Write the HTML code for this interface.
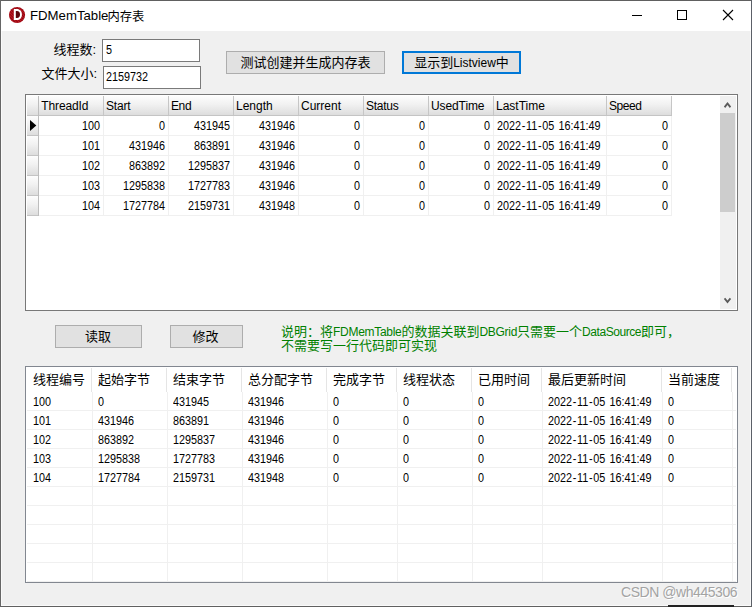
<!DOCTYPE html><html><head><meta charset="utf-8"><title>FDMemTable内存表</title><style>
html,body{margin:0;padding:0;}
body{width:752px;height:607px;overflow:hidden;position:relative;background:#f0f0f0;
 font-family:"Liberation Sans","Noto Sans CJK SC",sans-serif;font-size:12px;color:#000;}
.a{position:absolute;white-space:nowrap;}
.c{font-family:"Liberation Sans","Noto Sans CJK SC",sans-serif;font-size:13px;}
.n{font-size:12px;transform:scaleX(.9);transform-origin:0 0;}
.nr{transform-origin:100% 0;}
.h{margin:0 .75px;}
.ts{word-spacing:1.4px;}
.t{position:absolute;white-space:nowrap;line-height:16px;height:16px;}
.btn{position:absolute;box-sizing:border-box;background:#e1e1e1;border:1px solid #adadad;}
.edit{position:absolute;box-sizing:border-box;background:#fff;border:1px solid #7a7a7a;}
.box{position:absolute;box-sizing:border-box;background:#fff;border:1px solid #828790;}
.vl{position:absolute;width:1px;}
.hl{position:absolute;height:1px;}
.g{color:#008000;}
</style></head><body>
<div class="a" style="left:0;top:0;width:752px;height:31px;background:#fff"></div>
<div class="a" style="left:1px;top:31px;width:1px;height:575px;background:#fafafa"></div>
<div class="a" style="left:1px;top:605px;width:750px;height:1px;background:#fafafa"></div>
<div class="a" style="left:750px;top:31px;width:1px;height:575px;background:#f8f8f8"></div>
<div class="a" style="left:0;top:0;width:752px;height:1px;background:#606060"></div>
<div class="a" style="left:0;top:0;width:1px;height:607px;background:#666"></div>
<div class="a" style="left:751px;top:0;width:1px;height:607px;background:#5c6068"></div>
<div class="a" style="left:0;top:606px;width:752px;height:1px;background:#606060"></div>
<svg class="a" style="left:8px;top:6px" width="18" height="18" viewBox="0 0 18 18"><defs><pattern id="hp" width="2" height="2" patternUnits="userSpaceOnUse" patternTransform="rotate(45)"><rect width="2" height="2" fill="#c8141f"/><rect width="2" height="0.9" fill="#7c0811"/></pattern></defs><circle cx="9.05" cy="9" r="8.1" fill="url(#hp)"/><path d="M5.8 2.9h3c3.2 0 5.1 2.3 5.1 5.55s-1.9 5.55-5.1 5.55H5.8z" fill="#fff"/><path d="M7.8 4.9h1.2c2 0 3 1.5 3 3.5s-1 3.5-3 3.5H7.8z" fill="#5e060c"/></svg>
<div class="t" style="left:30px;top:8px;font-size:13.2px">FDMemTable</div><div class="t" style="left:107.5px;top:8.6px;font-size:12.3px">内存表</div>
<div class="a" style="left:632px;top:15px;width:10px;height:1px;background:#000"></div>
<div class="a" style="left:677px;top:10px;width:10px;height:10px;box-sizing:border-box;border:1px solid #000"></div>
<svg class="a" style="left:722px;top:9px" width="12" height="12" viewBox="0 0 12 12"><path d="M1 1 L11 11 M11 1 L1 11" stroke="#000" stroke-width="1.1" fill="none"/></svg>
<div class="t c" style="left:39px;width:57px;text-align:right;top:41.5px">线程数:</div>
<div class="t c" style="left:40px;width:57px;text-align:right;top:66px">文件大小:</div>
<div class="edit" style="left:102px;top:39px;width:98px;height:23px"></div>
<div class="t n" style="left:106px;top:42px">5</div>
<div class="edit" style="left:103px;top:66px;width:98px;height:23px"></div>
<div class="t n" style="left:106px;top:69px">2159732</div>
<div class="btn" style="left:226px;top:51px;width:159px;height:23px"></div>
<div class="t c" style="left:226px;width:159px;text-align:center;top:54.5px">测试创建并生成内存表</div>
<div class="btn" style="left:402px;top:51px;width:119px;height:23px;border:2px solid #0078d7"></div>
<div class="t c" style="left:402px;width:119px;text-align:center;top:54.5px">显示到<span style="font-size:12px">Listview</span>中</div>
<div class="box" style="left:25px;top:94px;width:713px;height:217px;border-color:#787878"></div>
<div class="a" style="left:27px;top:96px;width:644px;height:19px;background:linear-gradient(#fdfdfd 0%,#f1f1f1 45%,#dddddd 100%)"></div>
<div class="hl" style="left:27px;top:115px;width:645px;background:#c4c4c4"></div>
<div class="a" style="left:27px;top:116px;width:11px;height:19px;background:linear-gradient(#fdfdfd 0%,#f1f1f1 45%,#dddddd 100%)"></div>
<div class="a" style="left:27px;top:136px;width:11px;height:19px;background:linear-gradient(#fdfdfd 0%,#f1f1f1 45%,#dddddd 100%)"></div>
<div class="a" style="left:27px;top:156px;width:11px;height:19px;background:linear-gradient(#fdfdfd 0%,#f1f1f1 45%,#dddddd 100%)"></div>
<div class="a" style="left:27px;top:176px;width:11px;height:19px;background:linear-gradient(#fdfdfd 0%,#f1f1f1 45%,#dddddd 100%)"></div>
<div class="a" style="left:27px;top:196px;width:11px;height:19px;background:linear-gradient(#fdfdfd 0%,#f1f1f1 45%,#dddddd 100%)"></div>
<div class="vl" style="left:38px;top:96px;height:120px;background:#bdbdbd"></div>
<div class="hl" style="left:27px;top:135px;width:11px;background:#c4c4c4"></div>
<div class="hl" style="left:39px;top:135px;width:633px;background:#f0f0f0"></div>
<div class="hl" style="left:27px;top:155px;width:11px;background:#c4c4c4"></div>
<div class="hl" style="left:39px;top:155px;width:633px;background:#f0f0f0"></div>
<div class="hl" style="left:27px;top:175px;width:11px;background:#c4c4c4"></div>
<div class="hl" style="left:39px;top:175px;width:633px;background:#f0f0f0"></div>
<div class="hl" style="left:27px;top:195px;width:11px;background:#c4c4c4"></div>
<div class="hl" style="left:39px;top:195px;width:633px;background:#f0f0f0"></div>
<div class="hl" style="left:27px;top:215px;width:11px;background:#c4c4c4"></div>
<div class="hl" style="left:39px;top:215px;width:633px;background:#f0f0f0"></div>
<div class="vl" style="left:103px;top:96px;height:19px;background:#c6c6c6"></div>
<div class="vl" style="left:103px;top:116px;height:100px;background:#f0f0f0"></div>
<div class="t" style="left:41.25px;top:98px;letter-spacing:-0.12px">ThreadId</div>
<div class="vl" style="left:168px;top:96px;height:19px;background:#c6c6c6"></div>
<div class="vl" style="left:168px;top:116px;height:100px;background:#f0f0f0"></div>
<div class="t" style="left:106px;top:98px;letter-spacing:-0.2px">Start</div>
<div class="vl" style="left:233px;top:96px;height:19px;background:#c6c6c6"></div>
<div class="vl" style="left:233px;top:116px;height:100px;background:#f0f0f0"></div>
<div class="t" style="left:171px;top:98px;letter-spacing:-0.4px">End</div>
<div class="vl" style="left:298px;top:96px;height:19px;background:#c6c6c6"></div>
<div class="vl" style="left:298px;top:116px;height:100px;background:#f0f0f0"></div>
<div class="t" style="left:236px;top:98px;letter-spacing:0">Length</div>
<div class="vl" style="left:363px;top:96px;height:19px;background:#c6c6c6"></div>
<div class="vl" style="left:363px;top:116px;height:100px;background:#f0f0f0"></div>
<div class="t" style="left:301px;top:98px;letter-spacing:0">Current</div>
<div class="vl" style="left:428px;top:96px;height:19px;background:#c6c6c6"></div>
<div class="vl" style="left:428px;top:116px;height:100px;background:#f0f0f0"></div>
<div class="t" style="left:366px;top:98px;letter-spacing:-0.25px">Status</div>
<div class="vl" style="left:493px;top:96px;height:19px;background:#c6c6c6"></div>
<div class="vl" style="left:493px;top:116px;height:100px;background:#f0f0f0"></div>
<div class="t" style="left:431px;top:98px;letter-spacing:-0.1px">UsedTime</div>
<div class="vl" style="left:606px;top:96px;height:19px;background:#c6c6c6"></div>
<div class="vl" style="left:606px;top:116px;height:100px;background:#f0f0f0"></div>
<div class="t" style="left:496px;top:98px;letter-spacing:0">LastTime</div>
<div class="vl" style="left:671px;top:96px;height:19px;background:#c6c6c6"></div>
<div class="vl" style="left:671px;top:116px;height:100px;background:#f0f0f0"></div>
<div class="t" style="left:609px;top:98px;letter-spacing:-0.45px">Speed</div>
<svg class="a" style="left:30px;top:120px" width="7" height="11" viewBox="0 0 7 11"><path d="M0 0 L6.3 5.5 L0 11z" fill="#000"/></svg>
<div class="t n nr" style="left:39px;width:61px;text-align:right;top:118px">100</div>
<div class="t n nr" style="left:104px;width:61px;text-align:right;top:118px">0</div>
<div class="t n nr" style="left:169px;width:61px;text-align:right;top:118px">431945</div>
<div class="t n nr" style="left:234px;width:61px;text-align:right;top:118px">431946</div>
<div class="t n nr" style="left:299px;width:61px;text-align:right;top:118px">0</div>
<div class="t n nr" style="left:364px;width:61px;text-align:right;top:118px">0</div>
<div class="t n nr" style="left:429px;width:61px;text-align:right;top:118px">0</div>
<div class="t n ts" style="left:497px;top:118px">2022<span class="h">-</span>11<span class="h">-</span>05 16:41:49</div>
<div class="t n nr" style="left:607px;width:61px;text-align:right;top:118px">0</div>
<div class="t n nr" style="left:39px;width:61px;text-align:right;top:138px">101</div>
<div class="t n nr" style="left:104px;width:61px;text-align:right;top:138px">431946</div>
<div class="t n nr" style="left:169px;width:61px;text-align:right;top:138px">863891</div>
<div class="t n nr" style="left:234px;width:61px;text-align:right;top:138px">431946</div>
<div class="t n nr" style="left:299px;width:61px;text-align:right;top:138px">0</div>
<div class="t n nr" style="left:364px;width:61px;text-align:right;top:138px">0</div>
<div class="t n nr" style="left:429px;width:61px;text-align:right;top:138px">0</div>
<div class="t n ts" style="left:497px;top:138px">2022<span class="h">-</span>11<span class="h">-</span>05 16:41:49</div>
<div class="t n nr" style="left:607px;width:61px;text-align:right;top:138px">0</div>
<div class="t n nr" style="left:39px;width:61px;text-align:right;top:158px">102</div>
<div class="t n nr" style="left:104px;width:61px;text-align:right;top:158px">863892</div>
<div class="t n nr" style="left:169px;width:61px;text-align:right;top:158px">1295837</div>
<div class="t n nr" style="left:234px;width:61px;text-align:right;top:158px">431946</div>
<div class="t n nr" style="left:299px;width:61px;text-align:right;top:158px">0</div>
<div class="t n nr" style="left:364px;width:61px;text-align:right;top:158px">0</div>
<div class="t n nr" style="left:429px;width:61px;text-align:right;top:158px">0</div>
<div class="t n ts" style="left:497px;top:158px">2022<span class="h">-</span>11<span class="h">-</span>05 16:41:49</div>
<div class="t n nr" style="left:607px;width:61px;text-align:right;top:158px">0</div>
<div class="t n nr" style="left:39px;width:61px;text-align:right;top:178px">103</div>
<div class="t n nr" style="left:104px;width:61px;text-align:right;top:178px">1295838</div>
<div class="t n nr" style="left:169px;width:61px;text-align:right;top:178px">1727783</div>
<div class="t n nr" style="left:234px;width:61px;text-align:right;top:178px">431946</div>
<div class="t n nr" style="left:299px;width:61px;text-align:right;top:178px">0</div>
<div class="t n nr" style="left:364px;width:61px;text-align:right;top:178px">0</div>
<div class="t n nr" style="left:429px;width:61px;text-align:right;top:178px">0</div>
<div class="t n ts" style="left:497px;top:178px">2022<span class="h">-</span>11<span class="h">-</span>05 16:41:49</div>
<div class="t n nr" style="left:607px;width:61px;text-align:right;top:178px">0</div>
<div class="t n nr" style="left:39px;width:61px;text-align:right;top:198px">104</div>
<div class="t n nr" style="left:104px;width:61px;text-align:right;top:198px">1727784</div>
<div class="t n nr" style="left:169px;width:61px;text-align:right;top:198px">2159731</div>
<div class="t n nr" style="left:234px;width:61px;text-align:right;top:198px">431948</div>
<div class="t n nr" style="left:299px;width:61px;text-align:right;top:198px">0</div>
<div class="t n nr" style="left:364px;width:61px;text-align:right;top:198px">0</div>
<div class="t n nr" style="left:429px;width:61px;text-align:right;top:198px">0</div>
<div class="t n ts" style="left:497px;top:198px">2022<span class="h">-</span>11<span class="h">-</span>05 16:41:49</div>
<div class="t n nr" style="left:607px;width:61px;text-align:right;top:198px">0</div>
<div class="a" style="left:720px;top:96px;width:16px;height:213px;background:#f0f0f0"></div>
<div class="a" style="left:720px;top:113px;width:15px;height:99px;background:#cdcdcd"></div>
<svg class="a" style="left:723px;top:101px" width="9" height="8" viewBox="0 0 9 8"><path d="M0.9 5.5 L2.2 6.9 L4.5 4.1 L6.8 6.9 L8.1 5.5 L4.5 1z" fill="#5a5a5a"/></svg>
<svg class="a" style="left:723px;top:297px" width="9" height="8" viewBox="0 0 9 8"><path d="M0.9 2.1 L2.2 0.7 L4.5 3.5 L6.8 0.7 L8.1 2.1 L4.5 6.6z" fill="#5a5a5a"/></svg>
<div class="btn" style="left:55px;top:325px;width:87px;height:23px"></div>
<div class="t c" style="left:54.5px;width:87px;text-align:center;top:328.5px">读取</div>
<div class="btn" style="left:170px;top:325px;width:73px;height:23px"></div>
<div class="t c" style="left:169px;width:73px;text-align:center;top:328.5px">修改</div>
<div class="t c g" style="left:281px;top:323.5px">说明：将<span style="font-size:12px;letter-spacing:-0.29px">FDMemTable</span>的数据关联到<span style="font-size:12px;letter-spacing:-0.3px">DBGrid</span>只需要一个<span style="font-size:12px;letter-spacing:-0.44px">DataSource</span>即可，</div>
<div class="t c g" style="left:281px;top:338px">不需要写一行代码即可实现</div>
<div class="box" style="left:25px;top:366px;width:713px;height:217px"></div>
<div class="hl" style="left:27px;top:410px;width:709px;background:#f0f0f0"></div>
<div class="hl" style="left:27px;top:429px;width:709px;background:#f0f0f0"></div>
<div class="hl" style="left:27px;top:448px;width:709px;background:#f0f0f0"></div>
<div class="hl" style="left:27px;top:467px;width:709px;background:#f0f0f0"></div>
<div class="hl" style="left:27px;top:486px;width:709px;background:#f0f0f0"></div>
<div class="hl" style="left:27px;top:505px;width:709px;background:#f0f0f0"></div>
<div class="hl" style="left:27px;top:524px;width:709px;background:#f0f0f0"></div>
<div class="hl" style="left:27px;top:543px;width:709px;background:#f0f0f0"></div>
<div class="hl" style="left:27px;top:562px;width:709px;background:#f0f0f0"></div>
<div class="hl" style="left:27px;top:581px;width:709px;background:#f0f0f0"></div>
<div class="vl" style="left:91px;top:368px;height:24px;background:#e5e5e5"></div>
<div class="vl" style="left:92px;top:392px;height:189px;background:#f0f0f0"></div>
<div class="t c" style="left:33px;top:372px">线程编号</div>
<div class="vl" style="left:166px;top:368px;height:24px;background:#e5e5e5"></div>
<div class="vl" style="left:167px;top:392px;height:189px;background:#f0f0f0"></div>
<div class="t c" style="left:98px;top:372px">起始字节</div>
<div class="vl" style="left:241px;top:368px;height:24px;background:#e5e5e5"></div>
<div class="vl" style="left:242px;top:392px;height:189px;background:#f0f0f0"></div>
<div class="t c" style="left:173px;top:372px">结束字节</div>
<div class="vl" style="left:326px;top:368px;height:24px;background:#e5e5e5"></div>
<div class="vl" style="left:327px;top:392px;height:189px;background:#f0f0f0"></div>
<div class="t c" style="left:248px;top:372px">总分配字节</div>
<div class="vl" style="left:396px;top:368px;height:24px;background:#e5e5e5"></div>
<div class="vl" style="left:397px;top:392px;height:189px;background:#f0f0f0"></div>
<div class="t c" style="left:333px;top:372px">完成字节</div>
<div class="vl" style="left:471px;top:368px;height:24px;background:#e5e5e5"></div>
<div class="vl" style="left:472px;top:392px;height:189px;background:#f0f0f0"></div>
<div class="t c" style="left:403px;top:372px">线程状态</div>
<div class="vl" style="left:541px;top:368px;height:24px;background:#e5e5e5"></div>
<div class="vl" style="left:542px;top:392px;height:189px;background:#f0f0f0"></div>
<div class="t c" style="left:478px;top:372px">已用时间</div>
<div class="vl" style="left:661px;top:368px;height:24px;background:#e5e5e5"></div>
<div class="vl" style="left:662px;top:392px;height:189px;background:#f0f0f0"></div>
<div class="t c" style="left:548px;top:372px">最后更新时间</div>
<div class="vl" style="left:731px;top:368px;height:24px;background:#e5e5e5"></div>
<div class="vl" style="left:732px;top:392px;height:189px;background:#f0f0f0"></div>
<div class="t c" style="left:668px;top:372px">当前速度</div>
<div class="t n" style="left:33.4px;top:394px">100</div>
<div class="t n" style="left:98.4px;top:394px">0</div>
<div class="t n" style="left:173.4px;top:394px">431945</div>
<div class="t n" style="left:248.4px;top:394px">431946</div>
<div class="t n" style="left:333.4px;top:394px">0</div>
<div class="t n" style="left:403.4px;top:394px">0</div>
<div class="t n" style="left:478.4px;top:394px">0</div>
<div class="t n ts" style="left:548.4px;top:394px">2022<span class="h">-</span>11<span class="h">-</span>05 16:41:49</div>
<div class="t n" style="left:668.4px;top:394px">0</div>
<div class="t n" style="left:33.4px;top:413px">101</div>
<div class="t n" style="left:98.4px;top:413px">431946</div>
<div class="t n" style="left:173.4px;top:413px">863891</div>
<div class="t n" style="left:248.4px;top:413px">431946</div>
<div class="t n" style="left:333.4px;top:413px">0</div>
<div class="t n" style="left:403.4px;top:413px">0</div>
<div class="t n" style="left:478.4px;top:413px">0</div>
<div class="t n ts" style="left:548.4px;top:413px">2022<span class="h">-</span>11<span class="h">-</span>05 16:41:49</div>
<div class="t n" style="left:668.4px;top:413px">0</div>
<div class="t n" style="left:33.4px;top:432px">102</div>
<div class="t n" style="left:98.4px;top:432px">863892</div>
<div class="t n" style="left:173.4px;top:432px">1295837</div>
<div class="t n" style="left:248.4px;top:432px">431946</div>
<div class="t n" style="left:333.4px;top:432px">0</div>
<div class="t n" style="left:403.4px;top:432px">0</div>
<div class="t n" style="left:478.4px;top:432px">0</div>
<div class="t n ts" style="left:548.4px;top:432px">2022<span class="h">-</span>11<span class="h">-</span>05 16:41:49</div>
<div class="t n" style="left:668.4px;top:432px">0</div>
<div class="t n" style="left:33.4px;top:451px">103</div>
<div class="t n" style="left:98.4px;top:451px">1295838</div>
<div class="t n" style="left:173.4px;top:451px">1727783</div>
<div class="t n" style="left:248.4px;top:451px">431946</div>
<div class="t n" style="left:333.4px;top:451px">0</div>
<div class="t n" style="left:403.4px;top:451px">0</div>
<div class="t n" style="left:478.4px;top:451px">0</div>
<div class="t n ts" style="left:548.4px;top:451px">2022<span class="h">-</span>11<span class="h">-</span>05 16:41:49</div>
<div class="t n" style="left:668.4px;top:451px">0</div>
<div class="t n" style="left:33.4px;top:470px">104</div>
<div class="t n" style="left:98.4px;top:470px">1727784</div>
<div class="t n" style="left:173.4px;top:470px">2159731</div>
<div class="t n" style="left:248.4px;top:470px">431948</div>
<div class="t n" style="left:333.4px;top:470px">0</div>
<div class="t n" style="left:403.4px;top:470px">0</div>
<div class="t n" style="left:478.4px;top:470px">0</div>
<div class="t n ts" style="left:548.4px;top:470px">2022<span class="h">-</span>11<span class="h">-</span>05 16:41:49</div>
<div class="t n" style="left:668.4px;top:470px">0</div>
<div class="t" style="left:621px;top:584px;font-size:14px;letter-spacing:-0.45px;color:#a3a3a3;text-shadow:1px 1px 0 #fff">CSDN @wh445306</div>
<div class="a" style="left:668px;top:605px;width:66px;height:2px;background:#222"></div>
</body></html>
